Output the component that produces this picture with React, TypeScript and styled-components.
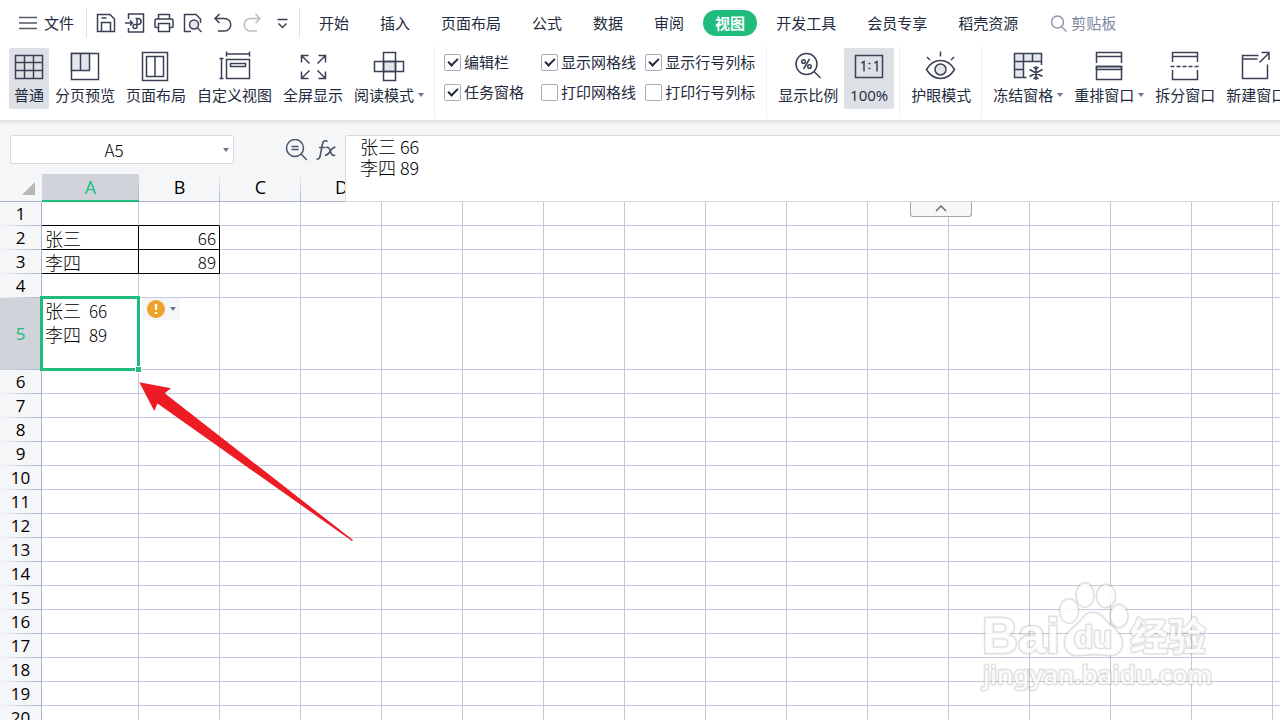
import React from "react";
import styled, { createGlobalStyle, css } from "styled-components";

const INK = "#232a3d";
const PANEL = "#f5f6f8";
const GREEN = "#20bc7e";
const GRID = "#c2c9da";
const EDGE = "#a9b4cb";
const SELECTED = "#d0d3da";

const Global = createGlobalStyle`
  *, *::before, *::after { box-sizing: border-box; }
  body { margin: 0; background: #fff; color: ${INK}; font-family: "Open Sans", "Noto Sans CJK SC", sans-serif; font-size: 15px; }
  button, input, textarea { font: inherit; color: inherit; margin: 0; }
`;

const Page = styled.div`
  height: 100vh;
  display: flex;
  flex-direction: column;
  overflow: hidden;
`;

const Ribbon = styled.header`
  position: relative;
  z-index: 3;
  background: #fff;
  height: 121px;
  flex: none;
  border-bottom: 1px solid #e2e3e5;
  box-shadow: 0 1px 3px rgba(0, 0, 0, 0.1);
  overflow: hidden;
`;

const MenuRow = styled.nav`
  display: flex;
  align-items: center;
  height: 46px;
  white-space: nowrap;
`;

const PlainButton = styled.button`
  border: 0;
  padding: 0;
  background: none;
  line-height: 22px;
  white-space: nowrap;
  flex: none;
`;

const FileButton = styled(PlainButton)`
  display: flex;
  align-items: center;
  gap: 7px;
  margin: 0 12px 0 19px;
`;

const MenuDivider = styled.span`
  width: 1px;
  height: 30px;
  background: #e1e3e7;
  flex: none;
`;

const QuickTools = styled.div`
  display: flex;
  align-items: center;
  gap: 9px;
  padding: 0 9px 0 9px;
`;

const QuickButton = styled(PlainButton)`
  width: 20px;
  height: 20px;
  display: block;
  svg { display: block; }
`;

const Tabs = styled.div`
  display: flex;
  align-items: center;
  gap: 7px;
  padding-left: 7px;
`;

const Tab = styled(PlainButton)<{ $active?: boolean }>`
  height: 26px;
  padding: 0 12px;
  border-radius: 13px;
  ${(p) => p.$active && css`background: ${GREEN}; color: #fff; font-weight: 700;`}
`;

const SearchButton = styled(PlainButton)`
  display: flex;
  align-items: center;
  gap: 4px;
  margin-left: 20px;
  color: #7d88a0;
`;

const ToolRow = styled.div`
  display: flex;
  align-items: flex-start;
  height: 74px;
  padding-left: 9px;
  white-space: nowrap;
`;

const ToolGroup = styled.div`
  display: flex;
  gap: 1px;
  padding: 2px 5px 0 0;
  flex: none;
`;

const GroupDivider = styled.span`
  width: 1px;
  height: 72px;
  background: #eff0f2;
  flex: none;
  margin-right: 6px;
`;

const ToolButton = styled(PlainButton)<{ $active?: boolean; $min?: number }>`
  display: flex;
  flex-direction: column;
  align-items: center;
  min-width: ${(p) => p.$min ?? 40}px;
  height: 61px;
  padding: 2px 5px 0;
  border-radius: 2px;
  background: ${(p) => (p.$active ? "#dde1e6" : "transparent")};
  svg { display: block; flex: none; margin: 0 -1px; }
`;

const ToolLabel = styled.span`
  display: flex;
  align-items: center;
  gap: 4px;
  height: 24px;
  margin-top: 1px;
`;

const Caret = styled.span`
  width: 0;
  height: 0;
  border: 3px solid transparent;
  border-top: 4px solid #6b7690;
  border-bottom: 0;
`;

const CheckGroup = styled.div`
  display: grid;
  grid-template-columns: repeat(3, max-content);
  grid-auto-rows: 30px;
  column-gap: 9px;
  align-items: center;
  padding: 1px 11px 0 3px;
  flex: none;
`;

const CheckLabel = styled.label<{ $wide?: boolean }>`
  display: flex;
  align-items: center;
  gap: 3px;
  line-height: 22px;
  padding-right: ${(p) => (p.$wide ? 8 : 0)}px;
`;

const CheckBox = styled.input`
  appearance: none;
  width: 17px;
  height: 17px;
  display: grid;
  place-items: center;
  border: 1px solid #a9adb6;
  border-radius: 2px;
  background: #fff;
  &:checked::after {
    content: "";
    width: 10px;
    height: 6px;
    border-left: 2px solid ${INK};
    border-bottom: 2px solid ${INK};
    transform: translateY(-1px) rotate(-45deg);
  }
`;

const FormulaBar = styled.section`
  position: relative;
  z-index: 2;
  display: flex;
  align-items: center;
  height: 53px;
  flex: none;
  background: ${PANEL};
  padding: 4px 0 0 10px;
`;

const NameBox = styled.div`
  display: flex;
  align-items: center;
  width: 224px;
  height: 29px;
  padding-right: 4px;
  background: #fff;
  border: 1px solid #d7d9dd;
  border-radius: 2px;
`;

const NameInput = styled.input`
  flex: 1;
  min-width: 0;
  border: 0;
  padding: 0 6px 0 0;
  outline: 0;
  background: none;
  text-align: center;
  color: #000;
  font: 300 17px/22px "Noto Sans CJK SC", sans-serif;
`;

const FormulaTools = styled.div`
  display: flex;
  align-items: center;
  gap: 9px;
  margin-left: 51px;
  svg { display: block; }
`;

const FormulaBox = styled.div`
  position: absolute;
  left: 345px;
  right: 0;
  top: 14px;
  height: 67px;
  background: #fff;
  border: solid #d7d9dd;
  border-width: 1px 0 1px 1px;
  border-top-left-radius: 3px;
`;

const FormulaInput = styled.textarea`
  display: block;
  width: 100%;
  height: 65px;
  border: 0;
  outline: 0;
  resize: none;
  padding: 0 14px;
  background: none;
  overflow: hidden;
  color: #000;
  font: 300 18px/21px "Noto Sans CJK SC", sans-serif;
`;

const CollapseButton = styled.button`
  position: absolute;
  left: 564px;
  top: 66px;
  width: 62px;
  height: 15px;
  padding: 0;
  display: grid;
  place-items: center;
  background: #f7f7f7;
  border: 1px solid #a6a6a6;
  border-top: 0;
  border-radius: 0 0 3px 3px;
`;

const Sheet = styled.main`
  position: relative;
  flex: 1;
  min-height: 0;
  overflow: hidden;
`;

const Grid = styled.table`
  table-layout: fixed;
  width: 1px;
  border-collapse: separate;
  border-spacing: 0;
  color: #000;
`;

const Col = styled.col<{ $w: number }>`
  width: ${(p) => p.$w}px;
`;

const Corner = styled.td`
  height: 28px;
  padding: 0 6px 6px 0;
  vertical-align: bottom;
  background: ${PANEL};
  border-right: 1px solid ${PANEL};
  border-bottom: 1px solid ${EDGE};
  svg { display: block; margin-left: auto; }
`;

const ColHead = styled.th<{ $on?: boolean }>`
  height: 28px;
  padding: 1px 0 0;
  vertical-align: top;
  font-size: 18px;
  line-height: 24px;
  font-weight: 400;
  color: ${(p) => (p.$on ? GREEN : "#000")};
  border-bottom: ${(p) => (p.$on ? `2px solid ${GREEN}` : `1px solid ${EDGE}`)};
  background: linear-gradient(transparent, ${EDGE}) right / 1px 100% no-repeat
    ${(p) => (p.$on ? SELECTED : PANEL)};
`;

const RowHead = styled.th<{ $on?: boolean }>`
  height: ${(p) => (p.$on ? 72 : 24)}px;
  padding: 0;
  font-size: 17px;
  line-height: 22px;
  font-weight: 400;
  color: ${(p) => (p.$on ? GREEN : "#000")};
  border-right: 1px solid ${EDGE};
  background: linear-gradient(to right, transparent, ${EDGE}) bottom / 100% 1px no-repeat
    ${(p) => (p.$on ? SELECTED : PANEL)};
`;

const Cell = styled.td<{ $right?: boolean; $lineBottom?: boolean; $lineRight?: boolean; $tall?: boolean }>`
  position: ${(p) => (p.$tall ? "relative" : "static")};
  padding: 0 3px;
  border-right: 1px solid ${(p) => (p.$lineRight ? "#000" : GRID)};
  border-bottom: 1px solid ${(p) => (p.$lineBottom ? "#000" : GRID)};
  text-align: ${(p) => (p.$right ? "right" : "left")};
  vertical-align: ${(p) => (p.$tall ? "top" : "middle")};
  font: 300 18px/20px "Noto Sans CJK SC", sans-serif;
  white-space: nowrap;
`;

const CellLine = styled.div`
  line-height: 24px;
  height: 24px;
`;

const Digits = styled.span<{ $after?: boolean }>`
  font-size: 17px;
  margin-left: ${(p) => (p.$after ? 4 : 0)}px;
`;

const Selection = styled.div`
  position: absolute;
  inset: -2px;
  border: 3px solid ${GREEN};
  pointer-events: none;
  &::after {
    content: "";
    position: absolute;
    right: -4px;
    bottom: -4px;
    width: 5px;
    height: 5px;
    background: ${GREEN};
    box-shadow: 0 0 0 1px #fff;
  }
`;

const TagCell = styled(Cell)`
  vertical-align: top;
  padding: 0 0 0 3px;
`;

const SmartTag = styled.button`
  display: flex;
  align-items: center;
  gap: 5px;
  width: 38px;
  height: 22px;
  padding: 0 0 0 5px;
  border: 0;
  background: ${PANEL};
`;

const Pointer = styled.svg`
  position: absolute;
  left: 136px;
  top: 204px;
  pointer-events: none;
`;

const Watermark = styled.svg`
  position: absolute;
  left: 976px;
  top: 406px;
  pointer-events: none;
  text, ellipse, path {
    paint-order: stroke;
    stroke: rgba(120, 120, 120, 0.24);
    stroke-width: 3px;
    stroke-linejoin: round;
    fill: #fff;
    fill-opacity: 0.85;
  }
`;

type IconProps = { children: React.ReactNode; w?: number; h?: number; color?: string; stroke?: number };
const Icon = ({ children, w = 32, h = 32, color = "#3a4154", stroke = 1.5 }: IconProps) => (
  <svg width={w} height={h} viewBox={`0 0 ${w} ${h}`} fill="none" stroke={color} strokeWidth={stroke} aria-hidden="true">
    {children}
  </svg>
);

const SHADE = "#e3e6ea";

const icons = {
  normal: <Icon><rect x="2.5" y="5.5" width="27" height="23" /><path d="M11.5 5.5v23M20.5 5.5v23M2.5 12.5h27M2.5 20.5h27" /></Icon>,
  breaks: <Icon><rect x="2.5" y="3.5" width="27" height="26" /><path d="M2.5 3.5h18v17h-18z" fill={SHADE} /><path d="M11.5 3.5v17" /></Icon>,
  layout: <Icon><rect x="2.5" y="2.5" width="25" height="28" /><rect x="6.5" y="6.5" width="17" height="20" /><path d="M15 6.5v20" /></Icon>,
  custom: <Icon><path d="M7.500 4h23M7.500 1.500v5M30.500 1.500v5M2.500 8.500v20M0.500 8.500h4M0.500 28.500h4" /><rect x="7.500" y="9.500" width="23" height="19" /><rect x="11.500" y="13.500" width="15" height="3" /></Icon>,
  full: <Icon><path d="M4.500 12.500v-7h7M4.500 5.500l8 8M21.500 5.500h7v7M28.500 5.500l-8 8M4.500 21.500v7h7M4.500 28.500l8-8M21.500 28.500h7v-7M28.500 28.500l-8-8" /></Icon>,
  read: <Icon><path d="M10.500 11.500h12v10h-12z" fill={SHADE} /><rect x="10.500" y="2.500" width="12" height="28" /><rect x="1.500" y="11.500" width="29" height="10" /></Icon>,
  zoom: <Icon><circle cx="14.500" cy="14" r="10.500" /><path d="M22 21.500l6.500 6.500M17.500 9l-6 10" /><circle cx="11.500" cy="11.500" r="1.800" /><circle cx="17.500" cy="16.500" r="1.800" /></Icon>,
  one: <Icon><rect x="2.500" y="5.500" width="27" height="22" /><path d="M8.500 13l2.500-1.500v10M21.500 13l2.500-1.500v10M15.500 13.500h2M15.500 18.500h2" /></Icon>,
  eye: <Icon><path d="M1.500 19.500C5 13.500 10 10.500 15.500 10.500s10.500 3 14 9c-3.500 6-8.500 9-14 9s-10.500-3-14-9zM15.500 1.500v5M2 7l3 3M29 7l-3 3" /><circle cx="15.500" cy="19.500" r="5.500" fill={SHADE} /></Icon>,
  freeze: <Icon><path d="M2.500 3.500h27v8h-18v16h-9z" fill={SHADE} stroke="none" /><path d="M29.500 15v-11.500h-27v24h12M2.500 11.500h27M11.500 3.500v24M20.500 3.500v8M2.500 19.500h9M24 16v14M17.500 19.500l13 7M17.500 26.500l13-7M21.500 17l2.500 2.500 2.500-2.500M21.500 29l2.500-2.500 2.500 2.500" /></Icon>,
  arrange: <Icon><path d="M3.500 13V2.500h25V13M3.500 6.500h25" /><path d="M3.500 16.500h25v3h-25z" fill={SHADE} /><path d="M3.500 16.500h25v13h-25z" /></Icon>,
  split: <Icon><path d="M3.500 12V2.500h25V12M3.500 6.500h25M3.500 20v9.500h25V20" /><path d="M1.500 16.500h29" strokeDasharray="4 2" /></Icon>,
  fresh: <Icon><path d="M18.500 5.500h-16v23h25v-14M2.500 9h15M19.500 12.500l9-9M21.500 2.500h7.500v7.500" /></Icon>,
};

const quick: { name: string; icon: React.ReactNode }[] = [
  { name: "保存", icon: <Icon w={20} h={20}><path d="M1.500 1.500h12.500l4.500 4.500v12.500h-17zM5.500 18.500v-9h9v9M5.500 5h5" /></Icon> },
  { name: "输出为PDF", icon: <Icon w={20} h={20}><path d="M3.500 6V1h15v18h-15v-4M0 10h7.500M5 7.500l2.500 2.500-2.500 2.500" /><path d="M10.500 5.500h2.500a2.800 2.800 0 0 1 0 6h-3a2 2 0 1 0 2 2v-8" /></Icon> },
  { name: "打印", icon: <Icon w={20} h={20}><path d="M4.500 6V1.500h11V6M4 14.500H2a1 1 0 0 1-1-1v-6a1.500 1.500 0 0 1 1.500-1.500h15a1.500 1.500 0 0 1 1.500 1.500v6a1 1 0 0 1-1 1h-2" /><rect x="4.500" y="10.500" width="11" height="8" /></Icon> },
  { name: "打印预览", icon: <Icon w={20} h={20}><path d="M8 18.500H1.500v-17h11.500l4.500 4.500v4" /><circle cx="11" cy="11.500" r="4.500" fill={SHADE} /><path d="M14.500 15l4 4" /></Icon> },
  { name: "撤销", icon: <Icon w={20} h={20}><path d="M7.500 1L3 5.500l4.500 4.500M3.500 5.500h9a6 6 0 0 1 0 12.500h-6.500" /></Icon> },
  { name: "恢复", icon: <Icon w={20} h={20} color="#b9bbc0"><path d="M14.500 1L19 5.500l-4.500 4.500M18.500 5.500h-9a6 6 0 0 0 0 12.500h6.500" /></Icon> },
  { name: "更多", icon: <Icon w={20} h={20}><path d="M7.500 6.500h10M8.500 10.500l4 4 4-4" /></Icon> },
];

type Tool = { label: string; icon: React.ReactNode; active?: boolean; menu?: boolean; min?: number };

const toolsView: Tool[] = [
  { label: "普通", icon: icons.normal, active: true },
  { label: "分页预览", icon: icons.breaks },
  { label: "页面布局", icon: icons.layout },
  { label: "自定义视图", icon: icons.custom },
  { label: "全屏显示", icon: icons.full },
  { label: "阅读模式", icon: icons.read, menu: true },
];
const toolsZoom: Tool[] = [
  { label: "显示比例", icon: icons.zoom },
  { label: "100%", icon: icons.one, active: true, min: 50 },
];
const toolsEye: Tool[] = [{ label: "护眼模式", icon: icons.eye }];
const toolsWindow: Tool[] = [
  { label: "冻结窗格", icon: icons.freeze, menu: true },
  { label: "重排窗口", icon: icons.arrange, menu: true },
  { label: "拆分窗口", icon: icons.split },
  { label: "新建窗口", icon: icons.fresh },
];

const checks = [
  { label: "编辑栏", on: true },
  { label: "显示网格线", on: true },
  { label: "显示行号列标", on: true },
  { label: "任务窗格", on: true },
  { label: "打印网格线", on: false },
  { label: "打印行号列标", on: false },
];

const tabs = ["开始", "插入", "页面布局", "公式", "数据", "审阅", "视图", "开发工具", "会员专享", "稻壳资源"];
const columns = Array.from("ABCDEFGHIJKLMNOPQRSTUVWXYZ");
const rows = Array.from({ length: 50 }, (_, i) => i + 1);
const records: Record<number, { name: string; score: number }> = {
  2: { name: "张三", score: 66 },
  3: { name: "李四", score: 89 },
};

const Tools = ({ items }: { items: Tool[] }) => (
  <ToolGroup>
    {items.map((t) => (
      <ToolButton key={t.label} $active={t.active} $min={t.min} type="button">
        {t.icon}
        <ToolLabel>{t.label}{t.menu && <Caret />}</ToolLabel>
      </ToolButton>
    ))}
  </ToolGroup>
);

const DataCell = ({ col, row }: { col: string; row: number }) => {
  const record = records[row];
  const framed = col === "A" || col === "B";
  if (row === 5 && col === "A") {
    return (
      <Cell $tall>
        {Object.values(records).map((r) => (
          <CellLine key={r.name}>{r.name} <Digits $after>{r.score}</Digits></CellLine>
        ))}
        <Selection />
      </Cell>
    );
  }
  if (row === 5 && col === "B") {
    return (
      <TagCell>
        <SmartTag type="button" aria-label="错误检查">
          <svg width="18" height="18" viewBox="0 0 18 18" aria-hidden="true">
            <circle cx="9" cy="9" r="9" fill="#eda128" />
            <path d="M9 4v6M9 12v2" stroke="#fff" strokeWidth="2.4" />
          </svg>
          <Caret />
        </SmartTag>
      </TagCell>
    );
  }
  return (
    <Cell $right={col === "B"} $lineBottom={framed && row < 4} $lineRight={framed && !!record}>
      {record && col === "A" && record.name}
      {record && col === "B" && <Digits>{record.score}</Digits>}
    </Cell>
  );
};

export default function App() {
  return (
    <Page>
      <Global />
      <Ribbon>
        <MenuRow>
          <FileButton type="button">
            <Icon w={18} h={14} color="#555b69"><path d="M0 1.500h18M0 7h18M0 12.500h18" /></Icon>
            文件
          </FileButton>
          <MenuDivider />
          <QuickTools>
            {quick.map((q) => <QuickButton key={q.name} type="button" aria-label={q.name}>{q.icon}</QuickButton>)}
          </QuickTools>
          <MenuDivider />
          <Tabs>
            {tabs.map((t) => <Tab key={t} type="button" $active={t === "视图"}>{t}</Tab>)}
          </Tabs>
          <SearchButton type="button">
            <Icon w={17} h={17} color="#8f99ad"><circle cx="7.500" cy="7" r="6" /><path d="M11.500 11.500l5 5" /></Icon>
            剪贴板
          </SearchButton>
        </MenuRow>
        <ToolRow>
          <Tools items={toolsView} />
          <GroupDivider />
          <CheckGroup>
            {checks.map((c, i) => (
              <CheckLabel key={c.label} $wide={i % 3 === 0}>
                <CheckBox type="checkbox" defaultChecked={c.on} />
                {c.label}
              </CheckLabel>
            ))}
          </CheckGroup>
          <GroupDivider />
          <Tools items={toolsZoom} />
          <GroupDivider />
          <Tools items={toolsEye} />
          <GroupDivider />
          <Tools items={toolsWindow} />
        </ToolRow>
      </Ribbon>
      <FormulaBar>
        <NameBox>
          <NameInput aria-label="名称框" defaultValue="A5" />
          <Caret />
        </NameBox>
        <FormulaTools>
          <PlainButton type="button" aria-label="浏览公式结果">
            <Icon w={22} h={22} color="#4b5468"><circle cx="10" cy="9" r="8.500" /><path d="M16 15l6 6M6.500 7.500h7M6.500 10.500h7" /></Icon>
          </PlainButton>
          <PlainButton type="button" aria-label="插入函数">
            <Icon w={22} h={22} color="#4b5468" stroke={1.6}>
              <path d="M11.500 2.500c-2.500-1.500-4.500-.5-5 2.500L4 17.500c-.5 2.500-2 3-3.500 2.200M3 8.500h6.500" />
              <path d="M10 8.500c2.500-1 3.500 1 4.500 4s2 5 4.500 3.500M19.500 8.500c-2.500-1-4 1.500-5.500 4s-3 4-5 3.500" />
            </Icon>
          </PlainButton>
        </FormulaTools>
        <FormulaBox>
          <FormulaInput aria-label="编辑栏内容" spellCheck={false} defaultValue={"张三 66\n李四 89"} />
          <CollapseButton type="button" aria-label="折叠编辑栏">
            <Icon w={12} h={8} color="#6d6d6d"><path d="M1 6l5-5 5 5" /></Icon>
          </CollapseButton>
        </FormulaBox>
      </FormulaBar>
      <Sheet>
        <Grid>
          <colgroup>
            <Col $w={42} />
            {columns.map((c) => <Col key={c} $w={c === "A" ? 97 : 81} />)}
          </colgroup>
          <thead>
            <tr>
              <Corner>
                <svg width="13" height="13" viewBox="0 0 13 13" aria-hidden="true"><path d="M13 0v13H0z" fill="#b7b7b7" /></svg>
              </Corner>
              {columns.map((c) => <ColHead key={c} $on={c === "A"} scope="col">{c}</ColHead>)}
            </tr>
          </thead>
          <tbody>
            {rows.map((r) => (
              <tr key={r}>
                <RowHead $on={r === 5} scope="row">{r}</RowHead>
                {columns.map((c) => <DataCell key={c} col={c} row={r} />)}
              </tr>
            ))}
          </tbody>
        </Grid>
        <Pointer width="220" height="168" viewBox="0 0 220 168" aria-hidden="true">
          <path d="M3.300 4.200L35 10.300l-6.300 5L217 162l-1 1L21.500 25.500l-3.200 7.500z" fill="#ed1c24" />
        </Pointer>
        <Watermark width="240" height="124" viewBox="0 0 240 124">
          <text x="6" y="73" fontFamily="Liberation Sans" fontWeight="700" fontSize="50">Bai</text>
          <ellipse cx="93" cy="31" rx="9" ry="11.500" />
          <ellipse cx="109" cy="15" rx="8.500" ry="11.500" />
          <ellipse cx="130" cy="16" rx="9" ry="11" />
          <ellipse cx="143" cy="36" rx="8.500" ry="11" />
          <path d="M117 33c9 0 11 7 17 12s12 10 12 18c0 9-7 13-14 12-6-1-9-1-15-1s-9 1-15 1c-8 1-13-5-13-13 0-8 6-12 12-17s7-12 16-12z" />
          <text x="98" y="68" fontFamily="Liberation Sans" fontWeight="700" fontSize="31">du</text>
          <text x="154" y="70" fontFamily="Noto Sans CJK SC" fontWeight="700" fontSize="38">经验</text>
          <text x="7" y="104" fontFamily="Noto Sans" fontWeight="500" fontSize="26">jingyan.baidu.com</text>
        </Watermark>
      </Sheet>
    </Page>
  );
}
